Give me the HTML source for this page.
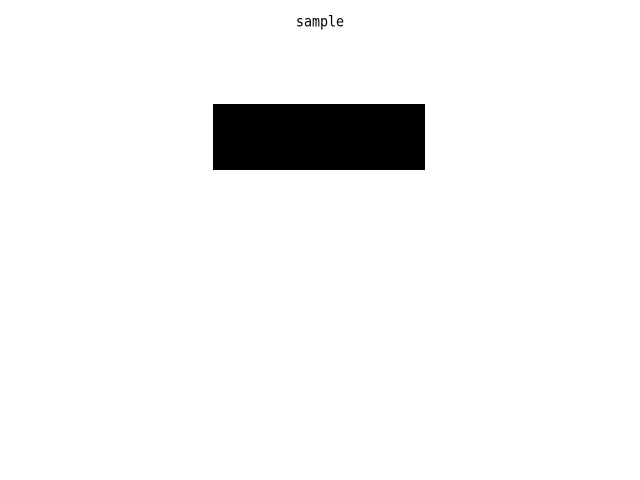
<!DOCTYPE html>
<html><head><style>
html,body{margin:0;padding:0;background:#fff;width:640px;height:480px;overflow:hidden}
.t{position:absolute;left:0;width:640px;top:13px;text-align:center;font-family:"DejaVu Sans Mono",monospace;font-size:13.33px;line-height:20px;color:#000;transform:scaleY(1.1)}
.b{position:absolute;left:213px;top:104px;width:212px;height:66px;background:#000}
</style></head><body>
<div class="t">sample</div>
<div class="b"></div>
</body></html>
